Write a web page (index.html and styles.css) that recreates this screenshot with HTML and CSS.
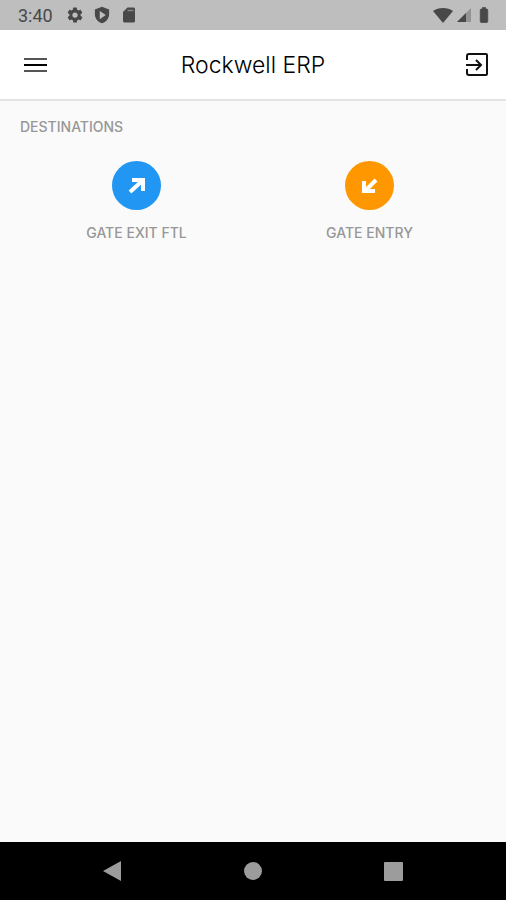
FILE: index.html
```html
<!doctype html>
<html lang="en">
<head>
    <meta charset="UTF-8">
    <meta name="viewport" content="width=device-width, initial-scale=1.0">
    <title>Rockwell ERP</title>
    <link rel="stylesheet" href="styles.css">
</head>
<body>
<div class="screen">
    <div class="status">
        <div class="status-group">
            <span class="time">3:40</span>
            <svg width="18" height="18" viewBox="0 0 24 24">
                <path fill-rule="evenodd" d="M19.4 13c0-.3.1-.6.1-1s0-.7-.1-1l2.1-1.600c.2-.2.3-.5.1-.7l-2-3.400c-.1-.2-.4-.3-.6-.2l-2.500 1c-.5-.4-1.100-.7-1.700-1L14.500 2.400c0-.2-.2-.4-.5-.4h-4c-.3 0-.5.200-.5.400l-.4 2.700c-.6.300-1.200.6-1.700 1l-2.500-1c-.2-.1-.5 0-.6.200l-2 3.400c-.1.200-.1.500.1.700L4.600 11c0 .3-.1.700-.1 1s0 .7.1 1l-2.100 1.600c-.2.200-.3.500-.1.700l2 3.400c.1.200.4.300.6.200l2.500-1c.5.400 1.100.7 1.700 1l.4 2.700c0 .2.200.4.5.4h4c.3 0 .5-.2.500-.4l.4-2.700c.6-.3 1.200-.6 1.700-1l2.500 1c.2.100.5 0 .6-.2l2-3.400c.1-.2.100-.5-.1-.7L19.400 13zM12 15.500a3.500 3.500 0 1 1 0-7 3.500 3.500 0 0 1 0 7z"/>
            </svg>
            <svg width="18" height="18" viewBox="0 0 24 24">
                <path fill-rule="evenodd" d="M12 1 2.500 4.500V11c0 5.500 4 10.500 9.500 12 5.500-1.500 9.500-6.500 9.500-12V4.500zM9 6.500l8 5.500-8 5.500z"/>
            </svg>
            <svg width="18" height="18" viewBox="0 0 24 24">
                <path d="M18 2h-8L4 8v12c0 1.100.9 2 2 2h12c1.100 0 2-.9 2-2V4c0-1.100-.9-2-2-2z"/>
                <path d="M10 5h8v2h-8z" fill="#858585"/>
            </svg>
        </div>
        <div class="status-group status-right">
            <svg width="20" height="18" viewBox="0 0 20 18">
                <path d="M0 5C5 1 15 1 20 5L10 17z"/>
            </svg>
            <svg width="16" height="18" viewBox="0 0 16 18">
                <path d="M15 2v14H1z" opacity=".35"/>
                <path d="M10 7v9H1z"/>
            </svg>
            <svg width="18" height="18" viewBox="0 0 24 24">
                <path d="M15.700 4H14V2h-4v2H8.300C7.600 4 7 4.600 7 5.300v15.400c0 .7.600 1.300 1.300 1.300h7.400c.7 0 1.300-.6 1.300-1.300V5.300c0-.7-.6-1.300-1.300-1.300z" stroke="#484848"/>
            </svg>
        </div>
    </div>

    <header class="toolbar">
        <button class="icon-btn" type="button" aria-label="Menu">
            <svg width="30" height="30" viewBox="0 0 30 30">
                <path d="M4 9h23M4 21h23" fill="none" stroke="#555" stroke-width="2"/>
                <path d="M4 15h23" fill="none" stroke="#000" stroke-width="2"/>
            </svg>
        </button>
        <h1>Rockwell ERP</h1>
        <button class="icon-btn icon-end" type="button" aria-label="Log out">
            <svg width="30" height="30" viewBox="0 0 30 30">
                <path d="M5 10V6q0-2 2-2h17q1 0 1 1v19q0 1-1 1H7q-2 0-2-2v-4M4 15h15M14 10l5 5-5 5" fill="none" stroke="#111" stroke-width="2"/>
            </svg>
        </button>
    </header>

    <main class="content">
        <h2>DESTINATIONS</h2>
        <div class="tiles">
            <button class="tile" type="button">
                <span class="circle blue">
                    <svg width="24" height="24" viewBox="0 0 24 24">
                        <path d="M5 18 17 7M7 6h11v11" fill="none" stroke="#fff" stroke-width="4"/>
                    </svg>
                </span>
                <span>GATE EXIT FTL</span>
            </button>
            <button class="tile" type="button">
                <span class="circle orange">
                    <svg width="24" height="24" viewBox="0 0 24 24">
                        <path d="M18 6 7 17M6 7v10h11" fill="none" stroke="#fff" stroke-width="4"/>
                    </svg>
                </span>
                <span>GATE ENTRY</span>
            </button>
        </div>
    </main>

    <nav class="navbar">
        <button type="button" aria-label="Back">
            <svg width="22" height="22" viewBox="0 0 22 22"><path d="M1 11 19 1v20z"/></svg>
        </button>
        <button type="button" aria-label="Home">
            <svg width="22" height="22" viewBox="0 0 22 22"><circle cx="11" cy="11" r="9"/></svg>
        </button>
        <button type="button" aria-label="Recent apps">
            <svg width="22" height="22" viewBox="0 0 22 22"><rect x="2" y="2" width="19" height="19" rx="1"/></svg>
        </button>
    </nav>
</div>
</body>
</html>
```
FILE: styles.css
```css
* {
    box-sizing: border-box;
}

body {
    font-family: Inter, sans-serif;
    margin: 0;
    background: #fafafa;
}

button {
    font: inherit;
    color: inherit;
    padding: 0;
    border: 0;
    background: none;
    cursor: pointer;
}

svg {
    display: block;
}

.screen {
    display: flex;
    flex-direction: column;
    min-height: 100vh;
}

.status {
    display: flex;
    align-items: center;
    justify-content: space-between;
    height: 30px;
    padding: 0 13px 0 18px;
    background: #bebebe;
    color: #484848;
    fill: #484848;
}

.status-group {
    display: flex;
    align-items: center;
    gap: 9px;
}

.status-right {
    gap: 3px;
}

.time {
    margin-right: 4px;
    font-family: Roboto, sans-serif;
    font-size: 18px;
}

.toolbar {
    display: flex;
    align-items: center;
    justify-content: space-between;
    height: 71px;
    padding: 0 14px;
    border-bottom: 2px solid #e4e4e4;
    background: #fff;
}

.toolbar h1 {
    margin: 0;
    font-size: 23px;
    font-weight: 300;
    color: #000;
}

.icon-btn {
    display: flex;
    justify-content: center;
    width: 42px;
}

.icon-end {
    justify-content: flex-end;
}

.content {
    flex: 1;
    padding: 16px 20px;
    font-size: 14px;
    font-weight: 500;
    line-height: 20px;
    color: #979797;
}

.content h2 {
    margin: 0;
    font-size: 14px;
    font-weight: 500;
}

.tiles {
    display: grid;
    grid-template-columns: 1fr 1fr;
    margin-top: 24px;
}

.tile {
    display: flex;
    flex-direction: column;
    align-items: center;
    gap: 13px;
}

.circle {
    display: flex;
    align-items: center;
    justify-content: center;
    width: 49px;
    height: 49px;
    border-radius: 50%;
}

.blue {
    background: #2196f3;
}

.orange {
    background: #ff9800;
}

.navbar {
    display: flex;
    justify-content: center;
    height: 58px;
    background: #000;
    fill: #9c9c9c;
}

.navbar button {
    display: flex;
    align-items: center;
    justify-content: center;
    width: 140px;
}
```
